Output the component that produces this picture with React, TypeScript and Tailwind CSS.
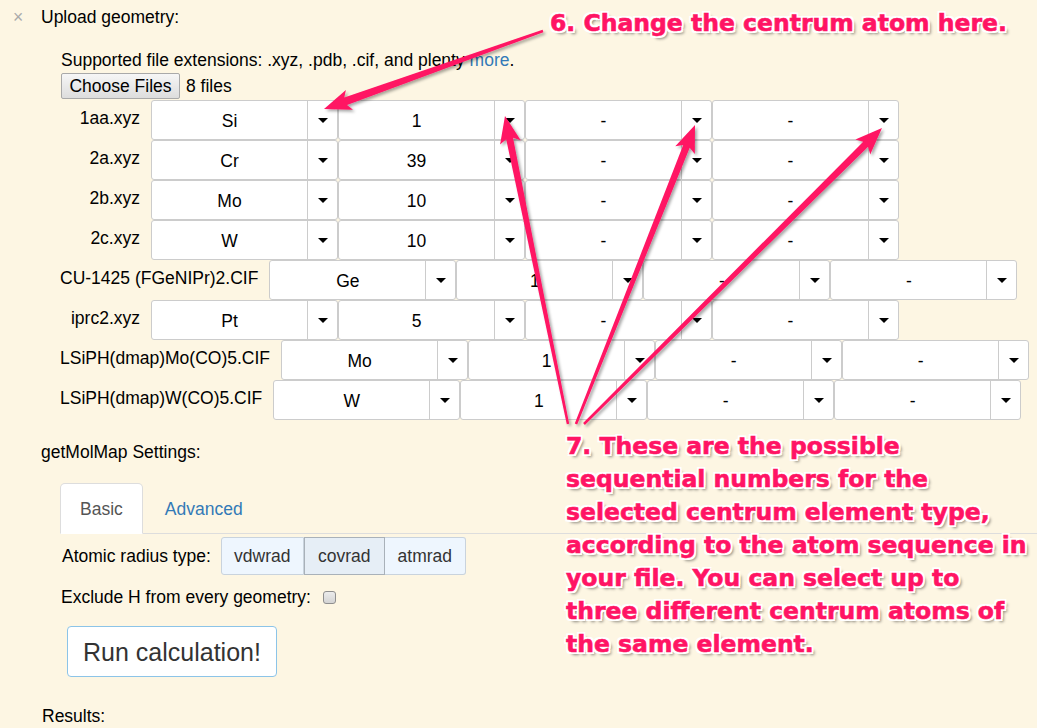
import React from "react";

// Uploaded geometries and their centrum selections
const geometries = [
  { name: "1aa.xyz", values: ["Si", "1", "-", "-"] },
  { name: "2a.xyz", values: ["Cr", "39", "-", "-"] },
  { name: "2b.xyz", values: ["Mo", "10", "-", "-"] },
  { name: "2c.xyz", values: ["W", "10", "-", "-"] },
  { name: "CU-1425 (FGeNIPr)2.CIF", values: ["Ge", "1", "-", "-"] },
  { name: "iprc2.xyz", values: ["Pt", "5", "-", "-"] },
  { name: "LSiPH(dmap)Mo(CO)5.CIF", values: ["Mo", "1", "-", "-"] },
  { name: "LSiPH(dmap)W(CO)5.CIF", values: ["W", "1", "-", "-"] },
];

const noteLines = [
  "7. These are the possible",
  "sequential numbers for the",
  "selected centrum element type,",
  "according to the atom sequence in",
  "your file. You can select up to",
  "three different centrum atoms of",
  "the same element.",
];

// tail -> tip
const arrows = [
  { from: [543, 31], to: [324, 109], w1: 8 },
  { from: [568, 424], to: [505, 116], w1: 7 },
  { from: [576, 424], to: [695, 125], w1: 7 },
  { from: [584, 424], to: [882, 128], w1: 7 },
];

function arrowPoints(x0: number, y0: number, x1: number, y1: number, w1: number) {
  const w0 = 2.5;
  const hw = 10.5;
  const hl = 23;
  const dx = x1 - x0;
  const dy = y1 - y0;
  const len = Math.hypot(dx, dy);
  const ux = dx / len;
  const uy = dy / len;
  const nx = -uy;
  const ny = ux;
  const bx = x1 - ux * hl;
  const by = y1 - uy * hl;
  const pts = [
    [x0 + (nx * w0) / 2, y0 + (ny * w0) / 2],
    [bx + (nx * w1) / 2, by + (ny * w1) / 2],
    [bx - ux * 4 + nx * hw, by - uy * 4 + ny * hw],
    [x1, y1],
    [bx - ux * 4 - nx * hw, by - uy * 4 - ny * hw],
    [bx - (nx * w1) / 2, by - (ny * w1) / 2],
    [x0 - (nx * w0) / 2, y0 - (ny * w0) / 2],
  ];
  return pts.map((p) => `${p[0].toFixed(1)},${p[1].toFixed(1)}`).join(" ");
}

function Caret() {
  return <span className="h-0 w-0 border-x-[5px] border-t-[5px] border-x-transparent border-t-black" />;
}

function Select({ value }: { value: string }) {
  return (
    <div className="flex h-[40px] w-[187px] shrink-0 rounded-[3px] border border-[#cccccc] bg-white">
      <div className="flex flex-1 items-center justify-center pt-[2px] leading-[24px]">{value}</div>
      <div className="flex w-[30px] items-center justify-center border-l border-[#cccccc]">
        <Caret />
      </div>
    </div>
  );
}

const outline =
  "[text-shadow:-2px_-2px_0_#fff,2px_-2px_0_#fff,-2px_2px_0_#fff,2px_2px_0_#fff,0_-2px_0_#fff,0_2px_0_#fff,-2px_0_0_#fff,2px_0_0_#fff,3px_3px_3px_rgba(0,0,0,0.45)] [-webkit-text-stroke:0.6px_#ff1464]";

export default function App() {
  return (
    <div className="relative h-screen overflow-hidden bg-[#fdf6e3] font-['Liberation_Sans',Arial,sans-serif] text-[17.5px] leading-[24px] text-black">
      {/* Header */}
      <div className="flex pl-[13px] pt-[5px]">
        <span className="w-[28px] text-[#aaaaaa]">×</span>
        <span>Upload geometry:</span>
      </div>

      <p className="mt-[19px] pl-[61px]">
        Supported file extensions: .xyz, .pdb, .cif, and plenty <span className="text-[#337ab7]">more</span>.
      </p>

      <div className="mt-[1px] flex h-[26px] items-center pl-[61px]">
        <button className="h-[26px] w-[119px] rounded-[2px] border border-[#a9a9a9] bg-gradient-to-b from-[#f6f6f6] to-[#dddddd] text-[17.5px] leading-[22px]">
          Choose Files
        </button>
        <span className="ml-[6px]">8 files</span>
      </div>

      {/* Centrum selection rows */}
      <div className="mt-[1px] pl-[60px]">
        {geometries.map((g) => (
          <div key={g.name} className="flex h-[40px] items-start">
            <span className="mr-[11px] min-w-[80px] whitespace-nowrap pt-[6px] text-right">{g.name}</span>
            {g.values.map((v, i) => (
              <Select key={i} value={v} />
            ))}
          </div>
        ))}
      </div>

      <p className="mt-[20px] pl-[41px]">getMolMap Settings:</p>

      {/* Tabs */}
      <div className="ml-[60px] mt-[19px] flex border-b border-[#dddddd]">
        <div className="-mb-px mr-[2px] flex h-[51px] items-center rounded-t-[5px] border border-[#dddddd] border-b-transparent bg-white px-[19px] text-[#555555]">
          Basic
        </div>
        <div className="-mb-px flex h-[51px] items-center border border-transparent px-[19px] text-[#337ab7]">
          Advanced
        </div>
      </div>

      <div className="mt-[3px] flex items-center pl-[62px]">
        <span>Atomic radius type:</span>
        <div className="ml-[10px] flex h-[38px] text-[#333333]">
          <div className="flex w-[83px] items-center justify-center rounded-l-[3px] border border-[#c9d3dd] bg-[#eef6fe]">
            vdwrad
          </div>
          <div className="flex w-[81px] items-center justify-center border border-[#a9b1b9] bg-[#e6eef6]">
            covrad
          </div>
          <div className="flex w-[81px] items-center justify-center rounded-r-[3px] border border-l-0 border-[#c9d3dd] bg-[#eef6fe]">
            atmrad
          </div>
        </div>
      </div>

      <div className="mt-[10px] flex items-center pl-[61px]">
        <span>Exclude H from every geometry:</span>
        <span className="ml-[12px] mt-[1px] h-[13px] w-[13px] rounded-[3px] border border-[#8f8f8f] bg-gradient-to-b from-[#ececec] to-[#d4d4d4]" />
      </div>

      <button className="ml-[67px] mt-[17px] flex h-[51px] w-[210px] items-center justify-center rounded-[4px] border border-[#8cc4e8] bg-white text-[25px] text-[#333333]">
        Run calculation!
      </button>

      <p className="mt-[27px] pl-[42px]">Results:</p>

      {/* Annotation arrows */}
      <svg className="pointer-events-none absolute left-0 top-0" width={1037} height={728}>
        <defs>
          <filter id="arrowShadow" x="-20%" y="-20%" width="140%" height="140%">
            <feDropShadow dx="2" dy="2" stdDeviation="1.5" floodColor="#000" floodOpacity="0.35" />
          </filter>
        </defs>
        {arrows.map((a, i) => (
          <polygon
            key={i}
            points={arrowPoints(a.from[0], a.from[1], a.to[0], a.to[1], a.w1)}
            fill="#ff1464"
            filter="url(#arrowShadow)"
          />
        ))}
      </svg>

      {/* Annotation texts */}
      <div
        className={`absolute left-[550px] top-[7px] whitespace-nowrap font-['DejaVu_Sans',sans-serif] text-[23.5px] font-bold leading-[33px] text-[#ff1464] ${outline}`}
      >
        6. Change the centrum atom here.
      </div>
      <div
        className={`absolute left-[566px] top-[430px] whitespace-nowrap font-['DejaVu_Sans',sans-serif] text-[23.5px] font-bold leading-[33px] text-[#ff1464] ${outline}`}
      >
        {noteLines.map((l) => (
          <div key={l}>{l}</div>
        ))}
      </div>
    </div>
  );
}
